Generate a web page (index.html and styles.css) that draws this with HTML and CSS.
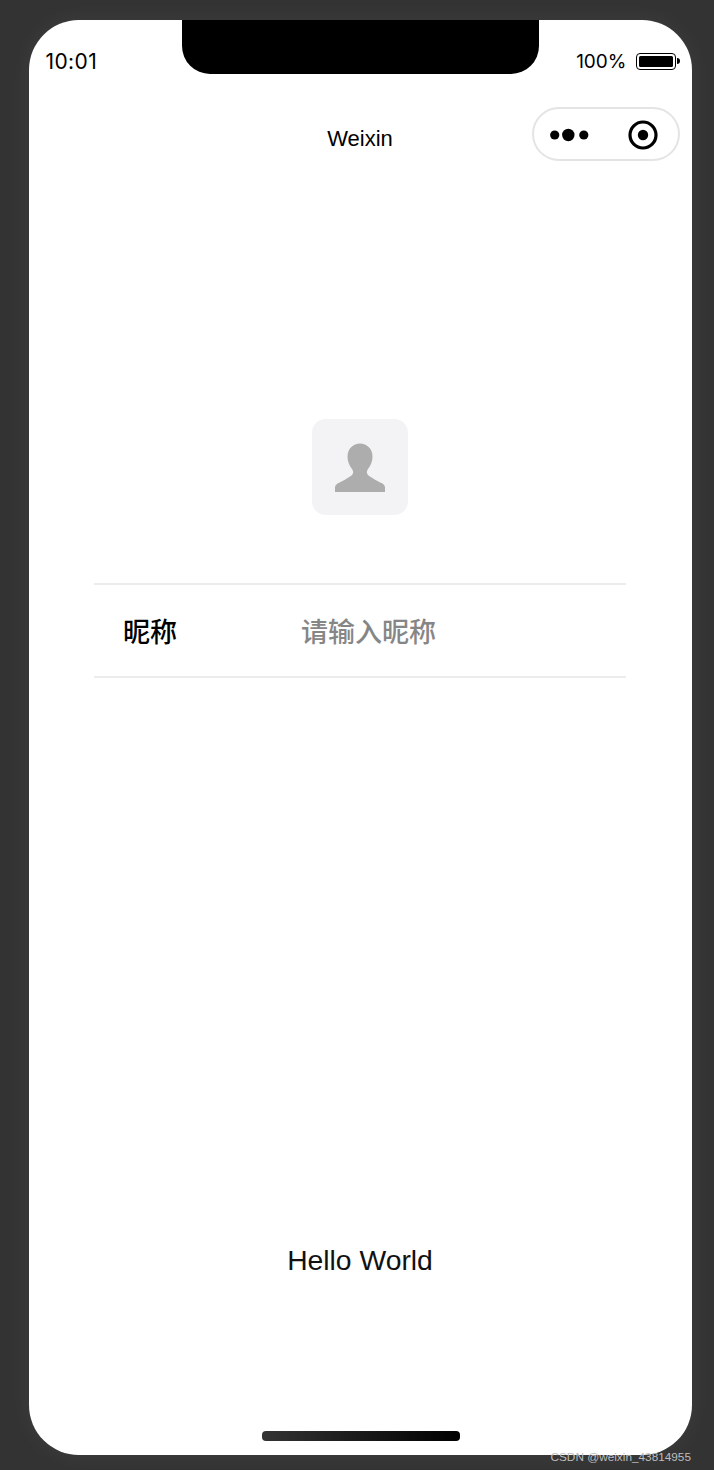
FILE: index.html
```html
<!DOCTYPE html>
<html>
<head>
  <title>Weixin</title>
  <link rel="stylesheet" href="styles.css">
</head>
<body>
  <div class="phone">
    <div class="notch"></div>

    <div class="status-bar">
      <span class="time">10:01</span>
      <div class="battery-info">
        <span class="percent">100%</span>
        <div class="battery"><div class="battery-level"></div></div>
        <div class="battery-tip"></div>
      </div>
    </div>

    <div class="nav-bar">
      <span class="nav-title">Weixin</span>
      <div class="capsule">
        <svg class="more-icon" width="40" height="14" viewBox="0 0 40 14">
          <circle cx="5.700" cy="7" r="4.600"/>
          <circle cx="19.300" cy="7" r="6.200"/>
          <circle cx="34.800" cy="7" r="4.600"/>
        </svg>
        <svg class="record-icon" width="30" height="30" viewBox="0 0 30 30">
          <circle cx="15" cy="15" r="13" fill="none" stroke="#000" stroke-width="3.200"/>
          <circle cx="15" cy="15" r="5.200"/>
        </svg>
      </div>
    </div>

    <div class="content">
      <div class="avatar">
        <svg width="52" height="50" viewBox="0 0 52 50">
          <path d="M26 1.500c-7 0-12.500 5.500-12.500 13 0 5 2 9.500 4.500 12.500 1.500 2 1.500 4.500 0 6-3 2.500-9 6-13.500 8-2 1-3.500 2.500-3.500 4.500v4.500h50V45.500c0-2-1.500-3.500-3.500-4.500-4.500-2-10.500-5.500-13.500-8-1.500-1.500-1.500-4 0-6 2.500-3 4.500-7.500 4.500-12.500 0-7.500-5.500-13-12.500-13z"/>
        </svg>
      </div>

      <div class="form-row">
        <span class="form-label">昵称</span>
        <span class="form-placeholder">请输入昵称</span>
      </div>

      <p class="hello">Hello World</p>
    </div>

    <div class="home-bar"></div>
  </div>

  <div class="watermark">CSDN @weixin_43814955</div>
</body>
</html>
```

FILE: styles.css
```css
html, body {
  margin: 0;
  padding: 0;
}

body {
  position: relative;
  height: 1470px;
  padding-top: 20px;
  box-sizing: border-box;
  overflow: hidden;
  background-color: #333;
  font-family: "Liberation Sans", "Noto Sans CJK SC", sans-serif;
}

.phone {
  position: relative;
  width: 663px;
  height: 1435px;
  margin-left: 28.5px;
  padding-top: 20px;
  box-sizing: border-box;
  overflow: hidden;
  background-color: #fff;
  border-radius: 50px;
  box-shadow: 0 0 28px rgba(255, 255, 255, 0.05);
  display: flex;
  flex-direction: column;
}

.notch {
  position: absolute;
  top: 0;
  left: 153px;
  width: 357px;
  height: 54px;
  background-color: #000;
  border-radius: 0 0 28px 28px;
}

.status-bar {
  display: flex;
  justify-content: space-between;
  align-items: center;
  height: 40px;
  padding: 2px 12px 0 17px;
  box-sizing: border-box;
  font-family: Inter, "Liberation Sans", sans-serif;
  color: #000;
}

.time {
  font-size: 21px;
  letter-spacing: 0.4px;
}

.battery-info {
  display: flex;
  align-items: center;
}

.percent {
  margin-right: 9px;
  font-size: 19px;
}

.battery {
  width: 40px;
  height: 17px;
  padding: 2px;
  box-sizing: border-box;
  border: 1.500px solid #000;
  border-radius: 4px;
}

.battery-level {
  height: 100%;
  background-color: #000;
  border-radius: 1.500px;
}

.battery-tip {
  width: 3px;
  height: 6px;
  margin-left: 1px;
  background-color: #000;
  border-radius: 0 3px 3px 0;
}

.nav-bar {
  display: flex;
  justify-content: center;
  align-items: center;
  position: relative;
  height: 54px;
  margin-top: 27px;
}

.nav-title {
  margin-top: 10px;
  font-size: 22px;
  color: #000;
}

.capsule {
  position: absolute;
  top: 0;
  right: 11.500px;
  width: 148px;
  height: 54px;
  box-sizing: border-box;
  padding: 2px 20px 0 15px;
  display: flex;
  justify-content: space-between;
  align-items: center;
  border: 2px solid #e4e4e4;
  border-radius: 27px;
}

.content {
  flex: 1;
  display: flex;
  flex-direction: column;
  align-items: center;
  padding-top: 258px;
}

.avatar {
  width: 96px;
  height: 96px;
  display: flex;
  justify-content: center;
  align-items: center;
  background-color: #f3f3f5;
  border-radius: 14px;
}

.avatar svg {
  fill: #adadad;
  filter: blur(0.6px);
}

.form-row {
  width: 532px;
  height: 95px;
  margin-top: 68px;
  padding-left: 29px;
  box-sizing: border-box;
  display: flex;
  align-items: center;
  border-top: 2px solid #ececec;
  border-bottom: 2px solid #ececec;
  font-size: 27px;
}

.form-label {
  width: 178px;
  font-weight: 500;
  color: #000;
}

.form-placeholder {
  font-weight: 500;
  color: #868686;
}

.hello {
  margin: 565px 0 0;
  font-size: 28.300px;
  line-height: 34px;
  color: #111;
}

.home-bar {
  position: absolute;
  left: 233px;
  bottom: 14px;
  width: 198px;
  height: 10px;
  background: linear-gradient(to right, #333, #000);
  border-radius: 4px;
}

.watermark {
  position: absolute;
  right: 23px;
  top: 1449px;
  font-size: 11.800px;
  line-height: 16px;
  color: #bdbdbd;
}
```
